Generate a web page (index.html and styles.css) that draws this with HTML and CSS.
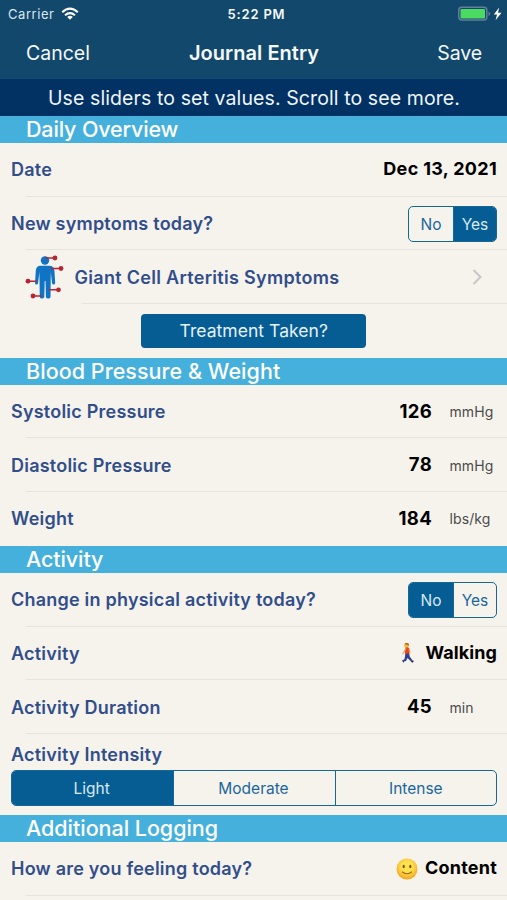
FILE: index.html
```html
<!DOCTYPE html>
<html lang="en">
<head>
<meta charset="utf-8">
<title>Journal Entry</title>
<link rel="stylesheet" href="styles.css">
</head>
<body>
<header class="top">
  <div class="status">
    <div class="carrier"><span>Carrier</span>
      <svg width="18" height="14" viewBox="0 0 18 14" fill="none" stroke="#fff" stroke-width="2.1"><path d="M1.2 5.2Q9-1.8 16.8 5.2M4 8.2q5-4.3 10 0"/><path d="M9 12.8 6.2 10q2.8-2.3 5.6 0z" fill="#fff" stroke="none"/></svg>
    </div>
    <div class="clock">5:22 PM</div>
    <div class="power">
      <svg width="45" height="16" viewBox="0 0 45 16"><rect x=".8" y="1.300" width="28" height="12.8" rx="3" fill="none" stroke="#637f9c" stroke-width="1.5"/><path d="M30.5 5.500V10q1.8-.6 1.8-2.2T30.500 5.500" fill="#637f9c"/><rect x="2.500" y="3" width="24.500" height="9.500" rx="1.300" fill="#4bdb60"/><path d="M41.200 1.500 35.800 8.600h3.200L37.600 14.200l5.900-7.500h-3.500z" fill="#fff"/></svg>
    </div>
  </div>
  <nav class="nav"><span class="cancel">Cancel</span><h1>Journal Entry</h1><span class="save">Save</span></nav>
</header>
<div class="hint"><span>Use sliders to set values. Scroll to see more.</span></div>

<h2><span class="h-daily">Daily Overview</span></h2>
<section>
  <div class="row"><span class="label">Date</span><span class="value date">Dec 13, 2021</span></div>
  <div class="row"><span class="label">New symptoms today?</span><div class="seg small"><span>No</span><span class="on">Yes</span></div></div>
  <div class="row inset">
    <svg class="body-icon" width="40" height="44" viewBox="0 0 40 44"><g fill="#0f74c4"><circle cx="20" cy="5.500" r="4.200"/><path d="M15.500 10.800h9q4.400 0 4.900 4.700L30.200 28q-.1 1.500-1.500 1.500T27 28l-1.200-11-.3 25q-.2 1.500-2.300 1.500T20.900 42l-.4-16h-.8l-.4 16q-.2 1.500-2.300 1.500T14.800 42l-.4-25-1.300 11q-.2 1.500-1.600 1.500T10 28l.8-12.500q.4-4.700 4.700-4.700z"/></g><g stroke="#b92432" stroke-width="1.500"><path d="M20.500 3H30M26 13.500h10M3 26.200h9M24 34.800h9.500M8 41h9"/></g><g fill="#b92432"><circle cx="30" cy="3" r="2.400"/><circle cx="36" cy="13.500" r="2.400"/><circle cx="3" cy="26.200" r="2.400"/><circle cx="33.500" cy="34.800" r="2.400"/><circle cx="8" cy="41" r="2.400"/></g></svg>
    <span class="label giant">Giant Cell Arteritis Symptoms</span>
    <svg class="chevron" width="11" height="18" viewBox="0 0 11 18" fill="none" stroke="#c7c6c6" stroke-width="2"><path d="m1.500 2 7 7-7 7"/></svg>
  </div>
  <div class="row center"><button>Treatment Taken?</button></div>
</section>

<h2><span class="h-blood">Blood Pressure &amp; Weight</span></h2>
<section>
  <div class="row"><span class="label">Systolic Pressure</span><span class="value num">126</span><span class="unit">mmHg</span></div>
  <div class="row"><span class="label">Diastolic Pressure</span><span class="value num">78</span><span class="unit">mmHg</span></div>
  <div class="row last"><span class="label">Weight</span><span class="value num">184</span><span class="unit">lbs/kg</span></div>
</section>

<h2><span>Activity</span></h2>
<section>
  <div class="row"><span class="label">Change in physical activity today?</span><div class="seg small"><span class="on">No</span><span>Yes</span></div></div>
  <div class="row"><span class="label">Activity</span>
    <svg class="walker" width="14" height="22" viewBox="0 0 14 22"><path d="M4.500 10.500 8 10l.7 4.500L12 19l-1.500 1-4-4-1.500 3-3.300.7-.3-1.300L3.600 17z" fill="#34418d"/><path d="M4.300 5.500Q7 4 8 6.200l.5 5.300-4.500.3z" fill="#e6402c"/><path d="m5 6-2 4-1.500 2M8 7l1 4" fill="none" stroke="#e8a33a" stroke-width="1.200"/><circle cx="5.500" cy="3.200" r="2.300" fill="#f5b72e"/><path d="M3.500 2Q5 .2 7.600 1.400L8 4 6.500 2.800z" fill="#ad5b16"/><path d="m1.300 17.800 2 2-1 1zM10 19.500l2.300-1 .4 1.300-1.500 1z" fill="#322a55"/></svg>
    <span class="value">Walking</span></div>
  <div class="row"><span class="label">Activity Duration</span><span class="value num">45</span><span class="unit">min</span></div>
  <div class="intensity"><span class="label">Activity Intensity</span><div class="seg wide"><span class="on">Light</span><span>Moderate</span><span>Intense</span></div></div>
</section>

<h2><span class="h-add">Additional Logging</span></h2>
<section>
  <div class="row"><span class="label">How are you feeling today?</span>
    <svg class="smile" width="22" height="22" viewBox="0 0 22 22"><defs><radialGradient id="face" cx=".5" cy=".4" r=".6"><stop offset=".45" stop-color="#ffe04e"/><stop offset="1" stop-color="#f2a31f"/></radialGradient></defs><circle cx="11" cy="11" r="10.500" fill="url(#face)"/><ellipse cx="7.700" cy="8.500" rx="1.100" ry="1.800" fill="#79500d"/><ellipse cx="14.300" cy="8.500" rx="1.100" ry="1.800" fill="#79500d"/><path d="M6.500 14q4.500 3.500 9 0" fill="none" stroke="#a56a10" stroke-width="1.200" stroke-linecap="round"/></svg>
    <span class="value content">Content</span></div>
</section>
</body>
</html>
```
FILE: styles.css
```css
* { box-sizing: border-box; }
body { margin: 0; width: 507px; height: 900px; overflow: hidden; background: #f6f3ed; font-family: Inter, "Liberation Sans", sans-serif; color: #000; }
.top { height: 79px; background: #13486d; color: #f5f9fc; }
.status { height: 28px; display: grid; grid-template-columns: 1fr auto 1fr; align-items: center; padding: 0 4px 0 8px; font-size: 13px; }
.carrier { display: flex; align-items: center; gap: 7px; letter-spacing: .55px; color: #dce7ef; }
.clock { font-weight: 600; letter-spacing: .8px; padding-left: 2px; }
.power { display: flex; justify-content: flex-end; }
.nav { height: 51px; display: grid; grid-template-columns: 1fr auto 1fr; align-items: center; padding: 0 25px 2px 26px; font-size: 19.5px; }
.nav h1 { margin: 0; font-size: 20px; font-weight: 600; letter-spacing: .05px; }
.save { text-align: right; letter-spacing: -.1px; }
.hint { height: 37px; background: #023163; color: #eff5fb; font-size: 19.5px; letter-spacing: .1px; display: flex; align-items: center; justify-content: center; white-space: nowrap; padding-left: 1px; }
h2 { margin: 0; height: 27px; padding-left: 26px; background: #46b0dc; color: #fff; font-size: 21.5px; font-weight: 500; line-height: 27px; letter-spacing: -.1px; }
.h-blood { letter-spacing: .05px; }
.h-daily { letter-spacing: -.15px; }
.h-add { letter-spacing: -.03px; }
.row { height: 53.7px; display: flex; align-items: center; padding: 0 10px 0 11px; background: linear-gradient(#e5e3de, #e5e3de) 26px 100% / 100% 1px no-repeat; }
.label { color: #314e8a; font-size: 18px; font-weight: 600; letter-spacing: .22px; white-space: nowrap; margin-right: auto; }
.giant { letter-spacing: .3px; }
.value { font-size: 18px; font-weight: 700; letter-spacing: .1px; white-space: nowrap; padding-bottom: 2px; }
.date { letter-spacing: .32px; }
.num { font-size: 18.5px; letter-spacing: .3px; }
.content { letter-spacing: .2px; }
.unit { width: 47.5px; margin-left: 17.5px; font-size: 14px; letter-spacing: .1px; color: #4b4b4b; }
.row.inset { background-position: 82px 100%; padding-left: 25px; }
.body-icon { flex: none; margin-right: 9.5px; }
.chevron { margin-right: 14px; }
.center { justify-content: center; padding-right: 10.5px; background: none; }
.row.last, .intensity { background: none; }
button { width: 225px; height: 34px; border: 0; border-radius: 4px; background: #065d94; color: #e6f1f8; font: 17.5px Inter, sans-serif; letter-spacing: .05px; padding: 0; }
.seg { display: grid; grid-auto-flow: column; grid-auto-columns: 1fr; border: 1.5px solid #176698; border-radius: 5px; overflow: hidden; color: #1a669b; font-size: 15.5px; }
.seg span { display: flex; align-items: center; justify-content: center; padding-top: 1px; }
.seg span + span { border-left: 1px solid #176698; }
.seg .on { background: #065d94; color: #d9e9f4; }
.small { width: 89px; height: 36px; grid-template-columns: 44px 1fr; }
.intensity { height: 81px; padding: 9px 10px 0 11px; }
.intensity .label { display: block; line-height: 23px; margin-bottom: 4px; }
.wide { height: 36px; }
.wide span { padding-right: 2px; }
.wide span:last-child { padding-right: 0; }
.walker { margin-right: 10px; }
.smile { margin-right: 7px; }
```
